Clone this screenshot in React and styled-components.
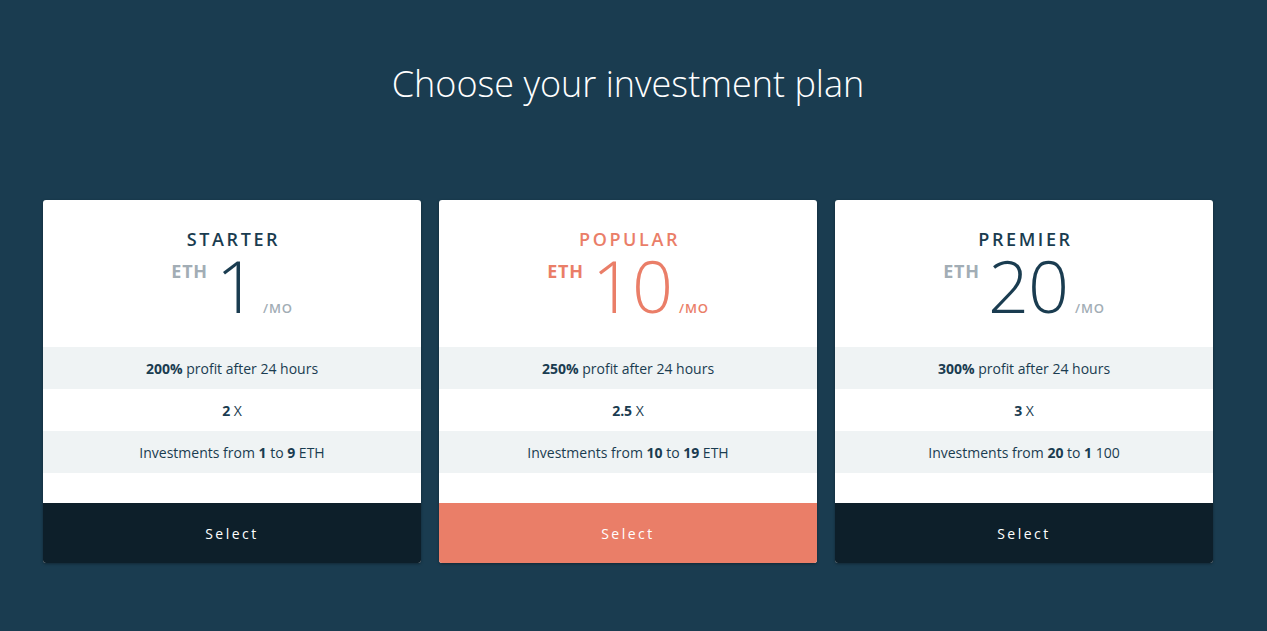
import React from "react";
import styled, { createGlobalStyle } from "styled-components";

const GlobalStyle = createGlobalStyle`
    html, body {
        margin: 0;
        padding: 0;
        background-color: #1a3c50;
    }
    body {
        font-family: "Open Sans", "Liberation Sans", sans-serif;
        -webkit-font-smoothing: antialiased;
    }
`;

const Page = styled.div`
    min-height: 631px;
    background-color: #1a3c50;
    padding-right: 11px;
    padding-bottom: 40px;
    box-sizing: border-box;
`;

const Title = styled.h1`
    margin: 0;
    padding-top: 66px;
    font-size: 36px;
    line-height: 1;
    font-weight: 300;
    color: #ffffff;
    text-align: center;
`;

const Plans = styled.div`
    width: 1170px;
    margin: 98px auto 0;
    display: grid;
    grid-template-columns: repeat(3, 378px);
    gap: 18px;
`;

const Card = styled.div`
    background-color: #ffffff;
    border-radius: 3px;
    overflow: hidden;
    box-shadow: 0 1px 3px rgba(0, 0, 0, 0.35);
    display: flex;
    flex-direction: column;
`;

const CardHead = styled.div`
    height: 147px;
    box-sizing: border-box;
    padding-top: 30px;
    display: flex;
    flex-direction: column;
    align-items: center;
    color: ${props => (props.$accent ? "#ea7e68" : "#1a3c50")};
`;

const PlanName = styled.div`
    font-size: 18px;
    line-height: 1;
    font-weight: 600;
    letter-spacing: 2.6px;
    padding-left: 3px;
`;

const Price = styled.div`
    display: flex;
    align-items: baseline;
    margin-top: 11px;
`;

const Currency = styled.span`
    align-self: flex-start;
    margin-top: 3px;
    margin-right: 8px;
    font-size: 18px;
    line-height: 1;
    font-weight: 700;
    letter-spacing: 0.8px;
    color: ${props => (props.$accent ? "#ea7e68" : "#a2adb5")};
`;

const Amount = styled.span`
    font-size: 72px;
    line-height: 52px;
    font-weight: 300;
    letter-spacing: -1px;
`;

const Period = styled.span`
    margin-left: 7px;
    font-size: 13px;
    line-height: 1;
    font-weight: 600;
    letter-spacing: 0.8px;
    color: ${props => (props.$accent ? "#ea7e68" : "#a2adb5")};
`;

const Feature = styled.div`
    height: 42px;
    display: flex;
    align-items: center;
    justify-content: center;
    font-size: 14px;
    color: #1a3c50;
    background-color: ${props => (props.$shaded ? "#eff3f4" : "#ffffff")};

    b {
        font-weight: 700;
    }
`;

const Spacer = styled.div`
    height: 30px;
`;

const SelectButton = styled.button`
    height: 60px;
    border: 0;
    margin: 0;
    width: 100%;
    cursor: pointer;
    font-family: inherit;
    font-size: 14px;
    letter-spacing: 2.5px;
    color: #ffffff;
    background-color: ${props => (props.$accent ? "#ea7e68" : "#0d1f2a")};
`;

const plans = [
    {
        name: "STARTER",
        amount: "1",
        profit: "200%",
        mult: "2",
        from: "1",
        to: "9",
        unit: " ETH",
    },
    {
        name: "POPULAR",
        amount: "10",
        profit: "250%",
        mult: "2.5",
        from: "10",
        to: "19",
        unit: " ETH",
        accent: true,
    },
    {
        name: "PREMIER",
        amount: "20",
        profit: "300%",
        mult: "3",
        from: "20",
        to: "1",
        unit: " 100",
    },
];

export default function App() {
    return (
        <Page>
            <GlobalStyle />
            <Title>Choose your investment plan</Title>
            <Plans>
                {plans.map(plan => (
                    <Card key={plan.name}>
                        <CardHead $accent={plan.accent}>
                            <PlanName>{plan.name}</PlanName>
                            <Price>
                                <Currency $accent={plan.accent}>ETH</Currency>
                                <Amount>{plan.amount}</Amount>
                                <Period $accent={plan.accent}>/MO</Period>
                            </Price>
                        </CardHead>
                        <Feature $shaded>
                            <span>
                                <b>{plan.profit}</b> profit after 24 hours
                            </span>
                        </Feature>
                        <Feature>
                            <span>
                                <b>{plan.mult}</b> X
                            </span>
                        </Feature>
                        <Feature $shaded>
                            <span>
                                Investments from <b>{plan.from}</b> to <b>{plan.to}</b>
                                {plan.unit}
                            </span>
                        </Feature>
                        <Spacer />
                        <SelectButton $accent={plan.accent}>Select</SelectButton>
                    </Card>
                ))}
            </Plans>
        </Page>
    );
}
